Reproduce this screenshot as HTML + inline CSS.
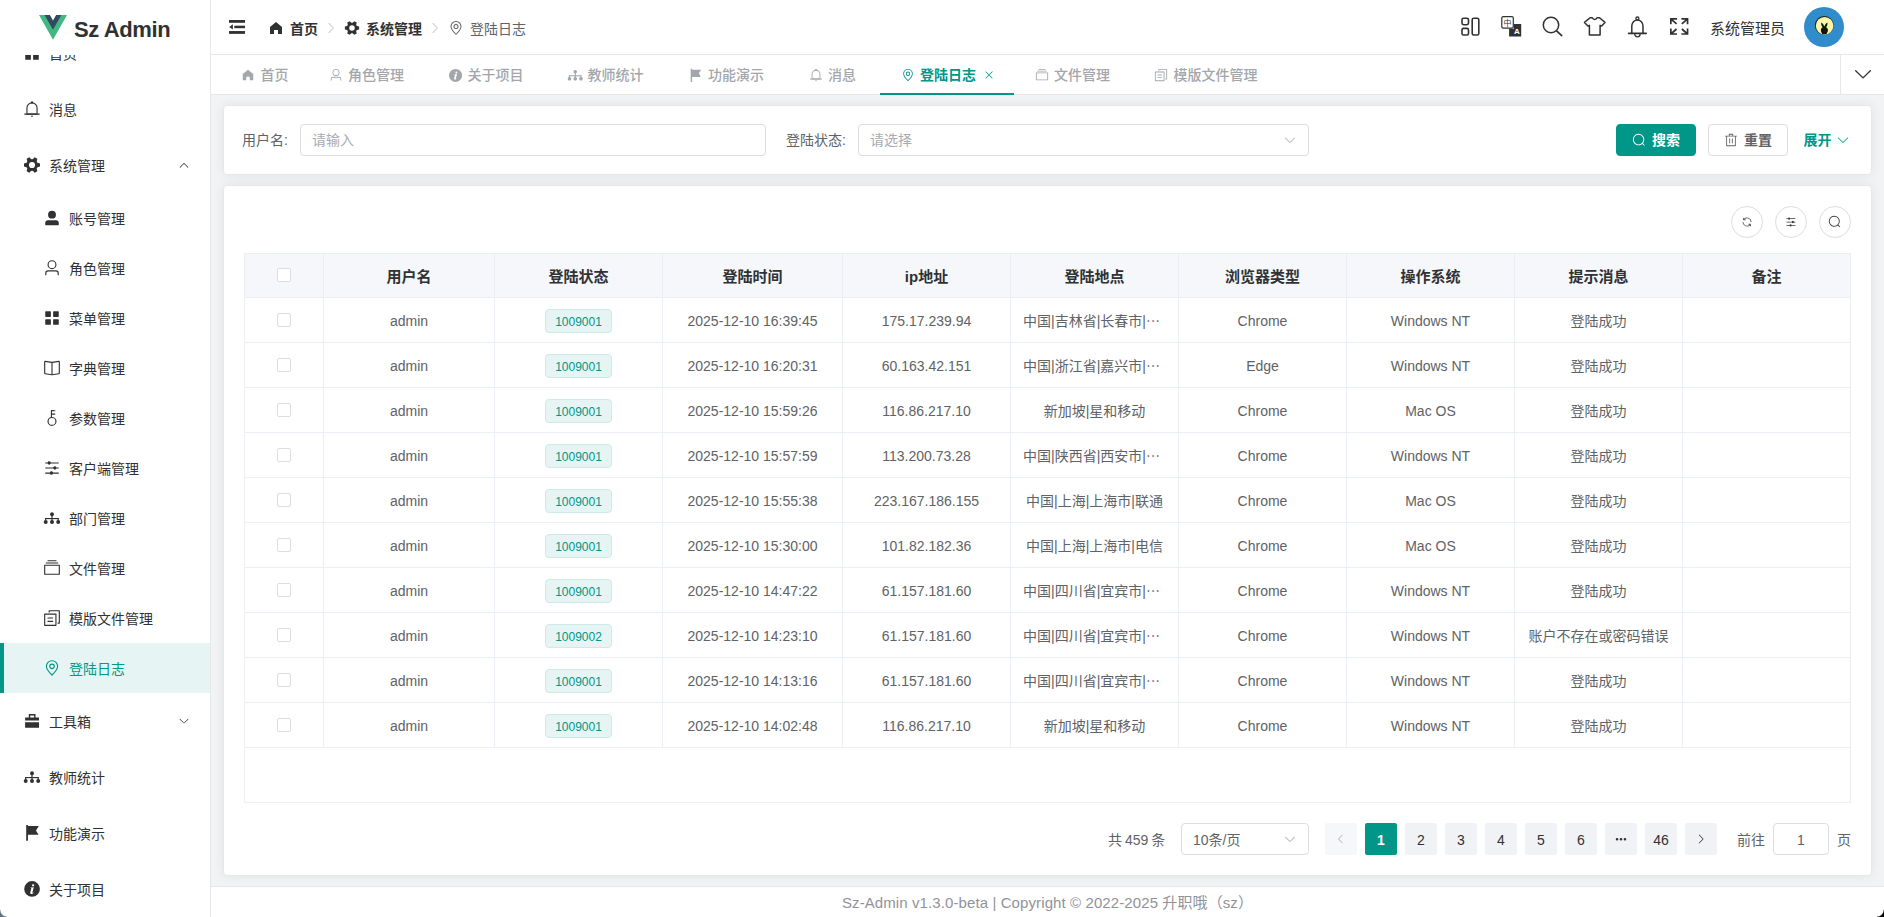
<!DOCTYPE html>
<html lang="zh-CN">
<head>
<meta charset="utf-8">
<title>Sz Admin - 登陆日志</title>
<style>
*{box-sizing:border-box;margin:0;padding:0}
html,body{width:1884px;height:917px;overflow:hidden;background:#fff}
body{font-family:"Liberation Sans","Noto Sans CJK SC",sans-serif;font-size:14px;color:#303133;position:relative;-webkit-font-smoothing:auto}
svg{display:block;fill:currentColor}
.abs{position:absolute}
/* ---------- sidebar ---------- */
#side{position:absolute;left:0;top:0;width:211px;height:917px;border-right:1px solid #e6e7e9;background:#fff;overflow:hidden}
#menu{position:absolute;left:0;top:25px;width:210px}
.mi{position:relative;height:56px;line-height:56px;padding-left:24px;white-space:nowrap;color:#303133}
.mi .ic{position:absolute;left:23px;top:19px;width:18px;height:18px}
.mi .tx{position:absolute;left:49px;top:1px}
.mi .ar{position:absolute;left:178px;top:22px;width:12px;height:12px}
.mi.sub{height:50px;line-height:50px}
.mi.sub .ic{left:43px;top:16px}
.mi.sub .tx{left:69px}
.mi.act{background:#e6f5f3;color:#009688}
.mi.act:before{content:"";position:absolute;left:0;top:0;width:4px;height:50px;background:#009688}
#logo{position:absolute;left:0;top:0;width:210px;height:55px;background:#fff}
#logo svg{position:absolute;left:39px;top:15px;width:28px;height:24.700px}
#logo span{position:absolute;left:74px;top:16px;font-size:22px;letter-spacing:-.4px;font-weight:700;line-height:28px;color:#303133;white-space:nowrap}
/* ---------- header ---------- */
#head{position:absolute;left:211px;top:0;width:1673px;height:55px;border-bottom:1px solid #e6e7e9;background:#fff}
#head .t{position:absolute;white-space:nowrap;line-height:20px;height:20px}
#tabs{position:absolute;left:211px;top:55px;width:1673px;height:40px;border-bottom:1px solid #e6e7e9;background:#fff}
.tab{position:absolute;top:0;height:39px;line-height:39px;color:#a3a6ab;font-weight:500;white-space:nowrap}
.tab .ic{position:absolute;left:0;top:13px;width:14px;height:14px}
.tab .tx{position:absolute;left:19.5px;top:1px}
.tab.on{color:#009688;font-weight:700}
/* ---------- main ---------- */
#main{position:absolute;left:211px;top:95px;width:1673px;height:791px;background:#f2f3f5;overflow:hidden}
.card{position:absolute;left:12px;width:1649px;background:#fff;border:1px solid #e6e7e9;border-radius:4px;box-shadow:0 0 12px rgba(0,0,0,.07)}
#foot{position:absolute;left:211px;top:886px;width:1673px;height:31px;border-top:1px solid #e6e7e9;background:#fff;text-align:center;color:#909399;font-size:15px;line-height:32px;white-space:nowrap;letter-spacing:.1px}

/* form */
.lb{position:absolute;top:34px;height:22px;line-height:22px;color:#606266;white-space:nowrap}
.inp{position:absolute;height:32px;border:1px solid #dcdde1;border-radius:4px;background:#fff;color:#a8abb2;line-height:30px;white-space:nowrap}
.btn{position:absolute;top:29px;width:80px;height:32px;border-radius:4px;border:1px solid #dcdde1;background:#fff;color:#606266;font-weight:700;line-height:30px;white-space:nowrap}
.btn svg{position:absolute;left:15px;top:8px;width:14px;height:14px}
.btn span{position:absolute;left:35px;top:0}
.btn.pri{background:#009688;border-color:#009688;color:#fff}
.circ{position:absolute;top:111px;width:32px;height:32px;border:1px solid #dcdde1;border-radius:50%;background:#fff;color:#3a3c40}
.circ svg{position:absolute;left:9px;top:9px;width:12px;height:12px}
/* table */
#tbl{position:absolute;left:33px;top:158px;width:1607px;height:550px;border:1px solid #ebeef5;background:#fff}
#tbl table{border-collapse:separate;border-spacing:0;table-layout:fixed;width:1605px}
#tbl th:last-child,#tbl td:last-child{border-right:0}
#tbl th,#tbl td{border-right:1px solid #ebeef5;border-bottom:1px solid #ebeef5;text-align:center;white-space:nowrap;overflow:hidden;padding:0;vertical-align:middle}
#tbl th{height:44px;background:#f5f7fa;color:#303133;font-weight:700;font-size:15px;line-height:23px;padding-top:2px}
#tbl th:first-child{padding:0 0 1px}
#tbl td:first-child{padding:0}
#tbl td{height:45px;color:#606266;line-height:23px;padding-top:2px}
#tbl td.el{text-align:left;padding-left:12px}
.ck{display:block;width:14px;height:14px;border:1px solid #dcdde1;border-radius:2px;background:#fff;margin:0 auto}
.tag{display:inline-block;height:24px;line-height:24px;padding:0 9px;font-size:12px;color:#009688;background:#e6f5f3;border:1px solid #cceae7;border-radius:4px;vertical-align:middle}
/* pagination */
.pg{position:absolute;top:729px;height:32px;line-height:32px;white-space:nowrap;color:#606266}
.pb{position:absolute;top:728px;width:32px;height:32px;line-height:34px;text-align:center;border-radius:2px;background:#f0f2f5;color:#303133}
.pb.on{background:#009688;color:#fff;font-weight:700}
.pb svg{position:absolute;left:10px;top:10px;width:12px;height:12px}
</style>
</head>
<body>
<!-- ================= SIDEBAR ================= -->
<div id="side">
  <div id="menu">
    <div class="mi"><svg class="ic" viewBox="0 0 1024 1024"><path d="M160 448a32 32 0 0 1-32-32V160.064a32 32 0 0 1 32-32h256a32 32 0 0 1 32 32V416a32 32 0 0 1-32 32zm448 0a32 32 0 0 1-32-32V160.064a32 32 0 0 1 32-32h255.936a32 32 0 0 1 32 32V416a32 32 0 0 1-32 32zM160 896a32 32 0 0 1-32-32V608a32 32 0 0 1 32-32h256a32 32 0 0 1 32 32v256a32 32 0 0 1-32 32zm448 0a32 32 0 0 1-32-32V608a32 32 0 0 1 32-32h255.936a32 32 0 0 1 32 32v256a32 32 0 0 1-32 32z"/></svg><span class="tx">首页</span></div>
    <div class="mi"><svg class="ic" viewBox="0 0 1024 1024"><path d="M512 64a64 64 0 0 1 64 64v64H448v-64a64 64 0 0 1 64-64"/><path d="M256 768h512V448a256 256 0 1 0-512 0zm256-640a320 320 0 0 1 320 320v384H192V448a320 320 0 0 1 320-320"/><path d="M96 768h832q32 0 32 32t-32 32H96q-32 0-32-32t32-32m352 128h128a64 64 0 0 1-128 0"/></svg><span class="tx">消息</span></div>
    <div class="mi"><svg class="ic" viewBox="-1 -1 18 18"><path fill-rule="evenodd" d="M13.45 5.75L16.00 6.45L16.00 9.55L13.45 10.25A5.9 5.9 0 0 1 12.68 11.60L13.34 14.15L10.66 15.70L8.78 13.85A5.9 5.9 0 0 1 7.22 13.85L5.34 15.70L2.66 14.15L3.32 11.60A5.9 5.9 0 0 1 2.55 10.25L0.00 9.55L-0.00 6.45L2.55 5.75A5.9 5.9 0 0 1 3.32 4.40L2.66 1.85L5.34 0.30L7.22 2.15A5.9 5.9 0 0 1 8.78 2.15L10.66 0.30L13.34 1.85L12.68 4.40A5.9 5.9 0 0 1 13.45 5.75ZM11.1 8A3.1 3.1 0 1 0 4.9 8A3.1 3.1 0 1 0 11.1 8Z"/></svg><span class="tx">系统管理</span><svg class="ar" viewBox="0 0 1024 1024"><path d="m488.832 344.32-339.84 356.672a32 32 0 0 0 0 44.16l.384.384a29.44 29.44 0 0 0 42.688 0l320-335.872 319.872 335.872a29.44 29.44 0 0 0 42.688 0l.384-.384a32 32 0 0 0 0-44.16L535.168 344.32a32 32 0 0 0-46.336 0"/></svg></div>
    <div class="mi sub"><svg class="ic" viewBox="0 0 1024 1024"><path d="M288 320a224 224 0 1 0 448 0 224 224 0 1 0-448 0m544 608H160a32 32 0 0 1-32-32v-96a160 160 0 0 1 160-160h448a160 160 0 0 1 160 160v96a32 32 0 0 1-32 32z"/></svg><span class="tx">账号管理</span></div>
    <div class="mi sub"><svg class="ic" viewBox="0 0 1024 1024"><path d="M512 512a192 192 0 1 0 0-384 192 192 0 0 0 0 384m0 64a256 256 0 1 1 0-512 256 256 0 0 1 0 512m320 320v-96a96 96 0 0 0-96-96H288a96 96 0 0 0-96 96v96a32 32 0 1 1-64 0v-96a160 160 0 0 1 160-160h448a160 160 0 0 1 160 160v96a32 32 0 1 1-64 0"/></svg><span class="tx">角色管理</span></div>
    <div class="mi sub"><svg class="ic" viewBox="0 0 1024 1024"><path d="M160 448a32 32 0 0 1-32-32V160.064a32 32 0 0 1 32-32h256a32 32 0 0 1 32 32V416a32 32 0 0 1-32 32zm448 0a32 32 0 0 1-32-32V160.064a32 32 0 0 1 32-32h255.936a32 32 0 0 1 32 32V416a32 32 0 0 1-32 32zM160 896a32 32 0 0 1-32-32V608a32 32 0 0 1 32-32h256a32 32 0 0 1 32 32v256a32 32 0 0 1-32 32zm448 0a32 32 0 0 1-32-32V608a32 32 0 0 1 32-32h255.936a32 32 0 0 1 32 32v256a32 32 0 0 1-32 32z"/></svg><span class="tx">菜单管理</span></div>
    <div class="mi sub"><svg class="ic" viewBox="0 0 1024 1024"><path d="m512 863.36 384-54.848v-638.72L525.568 222.72a96 96 0 0 1-27.136 0L128 169.792v638.72zM137.024 106.432l370.432 52.928a32 32 0 0 0 9.088 0l370.432-52.928A64 64 0 0 1 960 169.792v638.72a64 64 0 0 1-54.976 63.36l-388.48 55.488a32 32 0 0 1-9.088 0l-388.48-55.488A64 64 0 0 1 64 808.512v-638.72a64 64 0 0 1 73.024-63.36z"/><path d="M480 192h64v704h-64z"/></svg><span class="tx">字典管理</span></div>
    <div class="mi sub"><svg class="ic" viewBox="0 0 1024 1024"><path d="M448 456.064V96a32 32 0 0 1 32-32.064L672 64a32 32 0 0 1 0 64H512v128h160a32 32 0 0 1 0 64H512v128a256 256 0 1 1-64 8.064M512 896a192 192 0 1 0 0-384 192 192 0 0 0 0 384"/></svg><span class="tx">参数管理</span></div>
    <div class="mi sub"><svg class="ic" viewBox="0 0 1024 1024"><path d="M389.44 768a96.064 96.064 0 0 1 181.12 0H896v64H570.56a96.064 96.064 0 0 1-181.12 0H128v-64zm192-288a96.064 96.064 0 0 1 181.12 0H896v64H762.56a96.064 96.064 0 0 1-181.12 0H128v-64zm-320-288a96.064 96.064 0 0 1 181.12 0H896v64H442.56a96.064 96.064 0 0 1-181.12 0H128v-64z"/></svg><span class="tx">客户端管理</span></div>
    <div class="mi sub"><svg class="ic" viewBox="0 0 18 18"><circle cx="9" cy="5.200" r="1.950"/><rect x="8.400" y="5.200" width="1.200" height="7.500"/><rect x="2.050" y="9" width="13.700" height="1.150"/><rect x="2.050" y="9" width="1.150" height="3.500"/><rect x="14.600" y="9" width="1.150" height="3.500"/><circle cx="2.700" cy="12.900" r="2"/><circle cx="9" cy="12.900" r="2"/><circle cx="15.200" cy="12.900" r="2"/></svg><span class="tx">部门管理</span></div>
    <div class="mi sub"><svg class="ic" viewBox="0 0 1024 1024"><path d="M128 384v448h768V384zm-32-64h832a32 32 0 0 1 32 32v512a32 32 0 0 1-32 32H96a32 32 0 0 1-32-32V352a32 32 0 0 1 32-32m64-128h704v64H160zm96-128h512v64H256z"/></svg><span class="tx">文件管理</span></div>
    <div class="mi sub"><svg class="ic" viewBox="0 0 1024 1024"><path d="M128 320v576h576V320zm-32-64h640a32 32 0 0 1 32 32v640a32 32 0 0 1-32 32H96a32 32 0 0 1-32-32V288a32 32 0 0 1 32-32M960 96v704a32 32 0 0 1-32 32h-96v-64h64V128H384v64h-64V96a32 32 0 0 1 32-32h576a32 32 0 0 1 32 32M256 672h320v64H256zm0-192h320v64H256z"/></svg><span class="tx">模版文件管理</span></div>
    <div class="mi sub act"><svg class="ic" viewBox="0 0 1024 1024"><path d="M800 416a288 288 0 1 0-576 0c0 118.144 94.528 272.128 288 456.576C705.472 688.128 800 534.144 800 416M512 960C277.312 746.688 160 565.312 160 416a352 352 0 0 1 704 0c0 149.312-117.312 330.688-352 544"/><path d="M512 512a96 96 0 1 0 0-192 96 96 0 0 0 0 192m0 64a160 160 0 1 1 0-320 160 160 0 0 1 0 320"/></svg><span class="tx">登陆日志</span></div>
    <div class="mi"><svg class="ic" viewBox="0 0 18 18"><path fill-rule="evenodd" d="M5.800 2h6.700v3.400H16v3.200H2.100V5.400h3.700zM7.200 3.400v2h3.900v-2zM2.100 10.200H16v5.600H2.100z"/></svg><span class="tx">工具箱</span><svg class="ar" viewBox="0 0 1024 1024"><path d="M831.872 340.864 512 652.672 192.128 340.864a30.592 30.592 0 0 0-42.752 0 29.12 29.12 0 0 0 0 41.6L489.664 714.24a32 32 0 0 0 44.672 0l340.288-331.712a29.12 29.12 0 0 0 0-41.728 30.592 30.592 0 0 0-42.752 0z"/></svg></div>
    <div class="mi"><svg class="ic" viewBox="0 0 18 18"><circle cx="9" cy="5.200" r="1.950"/><rect x="8.400" y="5.200" width="1.200" height="7.500"/><rect x="2.050" y="9" width="13.700" height="1.150"/><rect x="2.050" y="9" width="1.150" height="3.500"/><rect x="14.600" y="9" width="1.150" height="3.500"/><circle cx="2.700" cy="12.900" r="2"/><circle cx="9" cy="12.900" r="2"/><circle cx="15.200" cy="12.900" r="2"/></svg><span class="tx">教师统计</span></div>
    <div class="mi"><svg class="ic" viewBox="0 0 18 18"><path d="M3.200 1h1.750v15.800H3.200zM4.950 2h10.850l-2.800 4.400 2.500 4.400H4.950z"/></svg><span class="tx">功能演示</span></div>
    <div class="mi"><svg class="ic" viewBox="0 0 18 18"><path fill-rule="evenodd" d="M9.050 1.100a7.850 7.850 0 1 0 0 15.700 7.850 7.850 0 0 0 0-15.700zM10.100 4.150a1.150 1.150 0 1 1 0 2.300 1.150 1.150 0 0 1 0-2.300zM7.700 7.500l3.100-.2-1.400 5.200c-.1.400.1.500.5.300l.5-.3.200.5c-.9.800-1.900 1.100-2.700.9-.6-.2-.8-.7-.6-1.500l1.100-4.100-.8-.2z"/></svg><span class="tx">关于项目</span></div>
  </div>
  <div id="logo">
    <svg viewBox="0 0 261.76 226.69" preserveAspectRatio="none"><path d="M161.096.001l-30.224 52.35L100.647.002H-.005L130.872 226.69 261.749 0z" fill="#41b883"/><path d="M161.096.001l-30.224 52.35L100.647.002H52.346l78.526 136.01L209.398.001z" fill="#34495e"/></svg>
    <span>Sz Admin</span>
  </div>
</div>

<!-- ================= HEADER ================= -->
<div id="head">
  <svg class="abs" style="left:17px;top:19px;width:18px;height:16px;color:#303133" viewBox="0 0 18 16"><rect x="1" y="1" width="16" height="2.800"/><rect x="6.300" y="6.700" width="10.700" height="2.500"/><rect x="1" y="12.050" width="16" height="2.800"/><path d="M1.200 7.900L4.900 5.200V10.500z"/></svg>
  <svg class="abs" style="left:57px;top:20px;width:16px;height:16px" viewBox="0 0 1024 1024"><path d="M512 128 128 447.936V896h255.936V640H640v256h255.936V447.936z"/></svg>
  <span class="t" style="left:79px;top:19px;font-weight:700">首页</span>
  <svg class="abs" style="left:113px;top:21px;width:14px;height:14px;color:#c0c4cc" viewBox="0 0 1024 1024"><path d="M340.864 149.312a30.592 30.592 0 0 0 0 42.752L652.736 512 340.864 831.872a30.592 30.592 0 0 0 0 42.752 29.12 29.12 0 0 0 41.728 0L714.24 534.336a32 32 0 0 0 0-44.672L382.592 149.376a29.12 29.12 0 0 0-41.728 0z"/></svg>
  <svg class="abs" style="left:133px;top:20px;width:16px;height:16px" viewBox="-1 -1 18 18"><path fill-rule="evenodd" d="M13.45 5.75L16.00 6.45L16.00 9.55L13.45 10.25A5.9 5.9 0 0 1 12.68 11.60L13.34 14.15L10.66 15.70L8.78 13.85A5.9 5.9 0 0 1 7.22 13.85L5.34 15.70L2.66 14.15L3.32 11.60A5.9 5.9 0 0 1 2.55 10.25L0.00 9.55L-0.00 6.45L2.55 5.75A5.9 5.9 0 0 1 3.32 4.40L2.66 1.85L5.34 0.30L7.22 2.15A5.9 5.9 0 0 1 8.78 2.15L10.66 0.30L13.34 1.85L12.68 4.40A5.9 5.9 0 0 1 13.45 5.75ZM11.1 8A3.1 3.1 0 1 0 4.9 8A3.1 3.1 0 1 0 11.1 8Z"/></svg>
  <span class="t" style="left:155px;top:19px;font-weight:700">系统管理</span>
  <svg class="abs" style="left:217px;top:21px;width:14px;height:14px;color:#c0c4cc" viewBox="0 0 1024 1024"><path d="M340.864 149.312a30.592 30.592 0 0 0 0 42.752L652.736 512 340.864 831.872a30.592 30.592 0 0 0 0 42.752 29.12 29.12 0 0 0 41.728 0L714.24 534.336a32 32 0 0 0 0-44.672L382.592 149.376a29.12 29.12 0 0 0-41.728 0z"/></svg>
  <svg class="abs" style="left:237px;top:20px;width:16px;height:16px;color:#606266" viewBox="0 0 1024 1024"><path d="M800 416a288 288 0 1 0-576 0c0 118.144 94.528 272.128 288 456.576C705.472 688.128 800 534.144 800 416M512 960C277.312 746.688 160 565.312 160 416a352 352 0 0 1 704 0c0 149.312-117.312 330.688-352 544"/><path d="M512 512a96 96 0 1 0 0-192 96 96 0 0 0 0 192m0 64a160 160 0 1 1 0-320 160 160 0 0 1 0 320"/></svg>
  <span class="t" style="left:259px;top:19px;color:#606266">登陆日志</span>

  <svg class="abs" style="left:1239px;top:0;width:250px;height:54px;color:#303133;fill:none" viewBox="1450 0 250 54" stroke="currentColor" stroke-width="1.600" stroke-linejoin="round" stroke-linecap="round">
    <!-- layout -->
    <rect x="1462" y="18.200" width="6.500" height="6.500" rx="1.600"/>
    <rect x="1462" y="28.400" width="6.500" height="6.600" rx="1.600"/>
    <rect x="1472.200" y="18.200" width="6.600" height="16.800" rx="1.600"/>
    <!-- translate -->
    <rect x="1501.800" y="16.600" width="11.500" height="11.600" rx="1.400" stroke-width="1.200" fill="#fff"/>
    <path d="M1513.900 24h7.300v12.400h-12.100v-7.600h4.800z" fill="currentColor" stroke="none"/>
    <text x="1507.550" y="25.600" font-size="8" text-anchor="middle" fill="currentColor" stroke="none" font-family="'Liberation Sans','Noto Sans CJK SC',sans-serif">中</text>
    <text x="1516.900" y="34.200" font-size="8" font-weight="700" text-anchor="middle" fill="#fff" stroke="none" font-family="'Liberation Sans','Noto Sans CJK SC',sans-serif">A</text>
    <!-- search -->
    <circle cx="1551" cy="25" r="7.700" stroke-width="1.500"/>
    <path d="M1556.600 30.800L1561.700 35.700" stroke-width="1.600"/>
    <!-- shirt -->
    <path d="M1590 17.700h2.400c.5 1.200 1.300 1.700 2.300 1.700s1.800-.5 2.300-1.700h2.500l5.500 4.700-3.400 3.700-1.500-.8v9.700h-10.700v-9.700l-1.500.8-3.400-3.700z" stroke-width="1.500"/>
    <!-- bell -->
    <circle cx="1637.400" cy="18.500" r="1.500" stroke-width="1.300"/>
    <path d="M1631.800 33.400v-7.600a5.600 5.900 0 0 1 11.200 0v7.600" stroke-width="1.500"/>
    <path d="M1628.600 33.400h17.600" stroke-width="1.600"/>
    <path d="M1634.700 34a2.700 2.900 0 0 0 5.400 0" stroke-width="1.400"/>
    <!-- fullscreen -->
    <g stroke-width="1.700" stroke-linecap="butt" stroke-linejoin="miter">
      <path d="M1677 18.950h-6.150v5.400M1670.850 18.950l5.700 5"/>
      <path d="M1681.400 18.950h6.150v5.400M1687.550 18.950l-5.700 5"/>
      <path d="M1677 34h-6.150v-5.400M1670.850 34l5.700-5"/>
      <path d="M1681.400 34h6.150v-5.400M1687.550 34l-5.700-5"/>
    </g>
  </svg>
  <span class="t" style="left:1499px;top:18px;font-size:15px;line-height:22px;height:22px">系统管理员</span>
  <svg class="abs" style="left:1593px;top:7px;width:40px;height:40px" viewBox="0 0 40 40">
    <circle cx="20" cy="20" r="20" fill="#308ccb"/>
    <circle cx="20.300" cy="18.300" r="9.400" fill="#1b1f10"/>
    <circle cx="20.600" cy="18.800" r="8.800" fill="#fdf6a9"/>
    <path d="M17.300 15.400c1.500.8 2.500 2.500 3 4.200.6-1.700 1.600-3.400 3.100-4.200.4 1.600-.3 3.600-1.300 4.900 1.500.7 2.100 2.300 1.700 3.900-.3 1.200-1 2.200-1.300 2.700h-4.300c-.5-.8-1.100-1.700-1.300-2.800-.3-1.600.3-3.100 1.700-3.800-1-1.300-1.700-3.300-1.300-4.900z" fill="#0f1600"/>
  </svg>
</div>

<!-- ================= TABS ================= -->
<div id="tabs">
  <div class="tab" style="left:30px"><svg class="ic" viewBox="0 0 1024 1024"><path d="M512 128 128 447.936V896h255.936V640H640v256h255.936V447.936z"/></svg><span class="tx">首页</span></div>
  <div class="tab" style="left:117.5px"><svg class="ic" viewBox="0 0 1024 1024"><path d="M512 512a192 192 0 1 0 0-384 192 192 0 0 0 0 384m0 64a256 256 0 1 1 0-512 256 256 0 0 1 0 512m320 320v-96a96 96 0 0 0-96-96H288a96 96 0 0 0-96 96v96a32 32 0 1 1-64 0v-96a160 160 0 0 1 160-160h448a160 160 0 0 1 160 160v96a32 32 0 1 1-64 0"/></svg><span class="tx">角色管理</span></div>
  <div class="tab" style="left:237px"><svg class="ic" style="left:-0.50px;top:12.50px;width:15px;height:15px" viewBox="0 0 18 18"><path fill-rule="evenodd" d="M9.050 1.100a7.850 7.850 0 1 0 0 15.700 7.850 7.850 0 0 0 0-15.700zM10.100 4.150a1.150 1.150 0 1 1 0 2.300 1.150 1.150 0 0 1 0-2.300zM7.700 7.500l3.100-.2-1.400 5.200c-.1.400.1.500.5.300l.5-.3.200.5c-.9.800-1.900 1.100-2.700.9-.6-.2-.8-.7-.6-1.500l1.100-4.100-.8-.2z"/></svg><span class="tx">关于项目</span></div>
  <div class="tab" style="left:357px"><svg class="ic" style="left:-1.25px;top:11.75px;width:16.5px;height:16.5px" viewBox="0 0 18 18"><circle cx="9" cy="5.200" r="1.950"/><rect x="8.400" y="5.200" width="1.200" height="7.500"/><rect x="2.050" y="9" width="13.700" height="1.150"/><rect x="2.050" y="9" width="1.150" height="3.500"/><rect x="14.600" y="9" width="1.150" height="3.500"/><circle cx="2.700" cy="12.900" r="2"/><circle cx="9" cy="12.900" r="2"/><circle cx="15.200" cy="12.900" r="2"/></svg><span class="tx">教师统计</span></div>
  <div class="tab" style="left:477.5px"><svg class="ic" style="left:-0.50px;top:12.50px;width:15px;height:15px" viewBox="0 0 18 18"><path d="M3.200 1h1.750v15.800H3.200zM4.950 2h10.850l-2.800 4.400 2.500 4.400H4.950z"/></svg><span class="tx">功能演示</span></div>
  <div class="tab" style="left:597.5px"><svg class="ic" viewBox="0 0 1024 1024"><path d="M512 64a64 64 0 0 1 64 64v64H448v-64a64 64 0 0 1 64-64"/><path d="M256 768h512V448a256 256 0 1 0-512 0zm256-640a320 320 0 0 1 320 320v384H192V448a320 320 0 0 1 320-320"/><path d="M96 768h832q32 0 32 32t-32 32H96q-32 0-32-32t32-32m352 128h128a64 64 0 0 1-128 0"/></svg><span class="tx">消息</span></div>
  <div class="tab on" style="left:689.5px"><svg class="ic" viewBox="0 0 1024 1024"><path d="M800 416a288 288 0 1 0-576 0c0 118.144 94.528 272.128 288 456.576C705.472 688.128 800 534.144 800 416M512 960C277.312 746.688 160 565.312 160 416a352 352 0 0 1 704 0c0 149.312-117.312 330.688-352 544"/><path d="M512 512a96 96 0 1 0 0-192 96 96 0 0 0 0 192m0 64a160 160 0 1 1 0-320 160 160 0 0 1 0 320"/></svg><span class="tx">登陆日志</span></div>
  <div class="tab" style="left:823.5px"><svg class="ic" viewBox="0 0 1024 1024"><path d="M128 384v448h768V384zm-32-64h832a32 32 0 0 1 32 32v512a32 32 0 0 1-32 32H96a32 32 0 0 1-32-32V352a32 32 0 0 1 32-32m64-128h704v64H160zm96-128h512v64H256z"/></svg><span class="tx">文件管理</span></div>
  <div class="tab" style="left:943px"><svg class="ic" viewBox="0 0 1024 1024"><path d="M128 320v576h576V320zm-32-64h640a32 32 0 0 1 32 32v640a32 32 0 0 1-32 32H96a32 32 0 0 1-32-32V288a32 32 0 0 1 32-32M960 96v704a32 32 0 0 1-32 32h-96v-64h64V128H384v64h-64V96a32 32 0 0 1 32-32h576a32 32 0 0 1 32 32M256 672h320v64H256zm0-192h320v64H256z"/></svg><span class="tx">模版文件管理</span></div>
  <svg class="abs" style="left:772px;top:13.500px;width:12px;height:12px;color:#009688" viewBox="0 0 1024 1024"><path d="M764.288 214.592 512 466.88 259.712 214.592a31.936 31.936 0 0 0-45.12 45.12L466.752 512 214.528 764.224a31.936 31.936 0 1 0 45.12 45.184L512 557.184l252.288 252.288a31.936 31.936 0 0 0 45.12-45.12L557.12 512.064l252.288-252.352a31.936 31.936 0 1 0-45.12-45.184z"/></svg>
  <div class="abs" style="left:669px;top:38px;width:134px;height:2px;background:#009688"></div>
  <div class="abs" style="left:1629px;top:0;width:1px;height:39px;background:#e6e7e9"></div>
  <svg class="abs" style="left:1641.200px;top:8px;width:22px;height:22px;color:#303133" viewBox="0 0 1024 1024"><path d="M831.872 340.864 512 652.672 192.128 340.864a30.592 30.592 0 0 0-42.752 0 29.12 29.12 0 0 0 0 41.6L489.664 714.24a32 32 0 0 0 44.672 0l340.288-331.712a29.12 29.12 0 0 0 0-41.728 30.592 30.592 0 0 0-42.752 0z"/></svg>
</div>

<!-- ================= MAIN ================= -->
<div id="main">
  <div class="card" id="c1" style="top:10px;height:70px"></div>
  <div class="card" id="c2" style="top:90px;height:691px"></div>
  <span class="lb" style="left:31px">用户名:</span>
  <div class="inp" style="left:89px;top:29px;width:466px;padding-left:11px">请输入</div>
  <span class="lb" style="left:575px">登陆状态:</span>
  <div class="inp" style="left:647px;top:29px;width:451px;padding-left:11px">请选择<svg class="abs" style="left:424px;top:8px;width:14px;height:14px" viewBox="0 0 1024 1024"><path d="M831.872 340.864 512 652.672 192.128 340.864a30.592 30.592 0 0 0-42.752 0 29.12 29.12 0 0 0 0 41.6L489.664 714.24a32 32 0 0 0 44.672 0l340.288-331.712a29.12 29.12 0 0 0 0-41.728 30.592 30.592 0 0 0-42.752 0z"/></svg></div>
  <div class="btn pri" style="left:1405px"><svg viewBox="0 0 1024 1024"><path d="m795.904 750.72 124.992 124.928a32 32 0 0 1-45.248 45.248L750.656 795.904a416 416 0 1 1 45.248-45.248zM480 832a352 352 0 1 0 0-704 352 352 0 0 0 0 704"/></svg><span>搜索</span></div>
  <div class="btn" style="left:1497px"><svg viewBox="0 0 1024 1024"><path d="M160 256H96a32 32 0 0 1 0-64h256V95.936a32 32 0 0 1 32-32h256a32 32 0 0 1 32 32V192h256a32 32 0 1 1 0 64h-64v672a32 32 0 0 1-32 32H192a32 32 0 0 1-32-32zm448-64v-64H416v64zM224 896h576V256H224zm192-128a32 32 0 0 1-32-32V416a32 32 0 0 1 64 0v320a32 32 0 0 1-32 32m192 0a32 32 0 0 1-32-32V416a32 32 0 0 1 64 0v320a32 32 0 0 1-32 32"/></svg><span>重置</span></div>
  <span class="lb" style="left:1592.500px;top:33.500px;color:#009688;font-weight:700">展开</span>
  <svg class="abs" style="left:1625px;top:38px;width:14px;height:14px;color:#009688" viewBox="0 0 1024 1024"><path d="M831.872 340.864 512 652.672 192.128 340.864a30.592 30.592 0 0 0-42.752 0 29.12 29.12 0 0 0 0 41.6L489.664 714.24a32 32 0 0 0 44.672 0l340.288-331.712a29.12 29.12 0 0 0 0-41.728 30.592 30.592 0 0 0-42.752 0z"/></svg>

  <div class="circ" style="left:1520px"><svg viewBox="0 0 1024 1024"><path d="M771.776 794.88A384 384 0 0 1 128 512h64a320 320 0 0 0 555.712 216.448H654.72a32 32 0 1 1 0-64h149.056a32 32 0 0 1 32 32v148.928a32 32 0 1 1-64 0v-50.56zM276.288 295.616h92.992a32 32 0 0 1 0 64H220.16a32 32 0 0 1-32-32V178.56a32 32 0 0 1 64 0v50.56A384 384 0 0 1 896.128 512h-64a320 320 0 0 0-555.776-216.384z"/></svg></div>
  <div class="circ" style="left:1564px"><svg viewBox="0 0 1024 1024"><path d="M389.44 768a96.064 96.064 0 0 1 181.12 0H896v64H570.56a96.064 96.064 0 0 1-181.12 0H128v-64zm192-288a96.064 96.064 0 0 1 181.12 0H896v64H762.56a96.064 96.064 0 0 1-181.12 0H128v-64zm-320-288a96.064 96.064 0 0 1 181.12 0H896v64H442.56a96.064 96.064 0 0 1-181.12 0H128v-64z"/></svg></div>
  <div class="circ" style="left:1608px"><svg style="left:8.300px;top:8.300px;width:13.400px;height:13.400px" viewBox="0 0 1024 1024"><path d="m795.904 750.72 124.992 124.928a32 32 0 0 1-45.248 45.248L750.656 795.904a416 416 0 1 1 45.248-45.248zM480 832a352 352 0 1 0 0-704 352 352 0 0 0 0 704"/></svg></div>
  <div id="tbl"><table><colgroup><col style="width:79px"><col style="width:171px"><col style="width:168px"><col style="width:180px"><col style="width:168px"><col style="width:168px"><col style="width:168px"><col style="width:168px"><col style="width:168px"><col style="width:167px"></colgroup>
<thead><tr><th><i class="ck"></i></th><th>用户名</th><th>登陆状态</th><th>登陆时间</th><th>ip地址</th><th>登陆地点</th><th>浏览器类型</th><th>操作系统</th><th>提示消息</th><th>备注</th></tr></thead>
<tbody>
<tr><td><i class="ck"></i></td><td>admin</td><td><span class="tag">1009001</span></td><td>2025-12-10 16:39:45</td><td>175.17.239.94</td><td class="el">中国|吉林省|长春市|⋯</td><td>Chrome</td><td>Windows NT</td><td>登陆成功</td><td></td></tr>
<tr><td><i class="ck"></i></td><td>admin</td><td><span class="tag">1009001</span></td><td>2025-12-10 16:20:31</td><td>60.163.42.151</td><td class="el">中国|浙江省|嘉兴市|⋯</td><td>Edge</td><td>Windows NT</td><td>登陆成功</td><td></td></tr>
<tr><td><i class="ck"></i></td><td>admin</td><td><span class="tag">1009001</span></td><td>2025-12-10 15:59:26</td><td>116.86.217.10</td><td>新加坡|星和移动</td><td>Chrome</td><td>Mac OS</td><td>登陆成功</td><td></td></tr>
<tr><td><i class="ck"></i></td><td>admin</td><td><span class="tag">1009001</span></td><td>2025-12-10 15:57:59</td><td>113.200.73.28</td><td class="el">中国|陕西省|西安市|⋯</td><td>Chrome</td><td>Windows NT</td><td>登陆成功</td><td></td></tr>
<tr><td><i class="ck"></i></td><td>admin</td><td><span class="tag">1009001</span></td><td>2025-12-10 15:55:38</td><td>223.167.186.155</td><td>中国|上海|上海市|联通</td><td>Chrome</td><td>Mac OS</td><td>登陆成功</td><td></td></tr>
<tr><td><i class="ck"></i></td><td>admin</td><td><span class="tag">1009001</span></td><td>2025-12-10 15:30:00</td><td>101.82.182.36</td><td>中国|上海|上海市|电信</td><td>Chrome</td><td>Mac OS</td><td>登陆成功</td><td></td></tr>
<tr><td><i class="ck"></i></td><td>admin</td><td><span class="tag">1009001</span></td><td>2025-12-10 14:47:22</td><td>61.157.181.60</td><td class="el">中国|四川省|宜宾市|⋯</td><td>Chrome</td><td>Windows NT</td><td>登陆成功</td><td></td></tr>
<tr><td><i class="ck"></i></td><td>admin</td><td><span class="tag">1009002</span></td><td>2025-12-10 14:23:10</td><td>61.157.181.60</td><td class="el">中国|四川省|宜宾市|⋯</td><td>Chrome</td><td>Windows NT</td><td>账户不存在或密码错误</td><td></td></tr>
<tr><td><i class="ck"></i></td><td>admin</td><td><span class="tag">1009001</span></td><td>2025-12-10 14:13:16</td><td>61.157.181.60</td><td class="el">中国|四川省|宜宾市|⋯</td><td>Chrome</td><td>Windows NT</td><td>登陆成功</td><td></td></tr>
<tr><td><i class="ck"></i></td><td>admin</td><td><span class="tag">1009001</span></td><td>2025-12-10 14:02:48</td><td>116.86.217.10</td><td>新加坡|星和移动</td><td>Chrome</td><td>Windows NT</td><td>登陆成功</td><td></td></tr>
</tbody></table></div>
  <span class="pg" style="left:897px;word-spacing:-1px">共 459 条</span>
  <div class="inp" style="left:970px;top:728px;width:128px;padding-left:11px;color:#606266;line-height:32px">10条/页<svg class="abs" style="left:101px;top:8px;width:14px;height:14px;color:#a8abb2" viewBox="0 0 1024 1024"><path d="M831.872 340.864 512 652.672 192.128 340.864a30.592 30.592 0 0 0-42.752 0 29.12 29.12 0 0 0 0 41.6L489.664 714.24a32 32 0 0 0 44.672 0l340.288-331.712a29.12 29.12 0 0 0 0-41.728 30.592 30.592 0 0 0-42.752 0z"/></svg></div>
  <div class="pb" style="left:1114px;color:#a8abb2;background:#f5f7fa"><svg viewBox="0 0 1024 1024"><path d="M609.408 149.376 277.76 489.6a32 32 0 0 0 0 44.672l331.648 340.352a29.12 29.12 0 0 0 41.728 0 30.592 30.592 0 0 0 0-42.752L339.264 511.936l311.872-319.872a30.592 30.592 0 0 0 0-42.688 29.12 29.12 0 0 0-41.728 0z"/></svg></div>
  <div class="pb on" style="left:1154px">1</div>
  <div class="pb" style="left:1194px">2</div>
  <div class="pb" style="left:1234px">3</div>
  <div class="pb" style="left:1274px">4</div>
  <div class="pb" style="left:1314px">5</div>
  <div class="pb" style="left:1354px">6</div>
  <div class="pb" style="left:1394px"><svg viewBox="0 0 1024 1024"><path d="M176 416a112 112 0 1 1 0 224 112 112 0 0 1 0-224m336 0a112 112 0 1 1 0 224 112 112 0 0 1 0-224m336 0a112 112 0 1 1 0 224 112 112 0 0 1 0-224"/></svg></div>
  <div class="pb" style="left:1434px">46</div>
  <div class="pb" style="left:1474px"><svg viewBox="0 0 1024 1024"><path d="M340.864 149.312a30.592 30.592 0 0 0 0 42.752L652.736 512 340.864 831.872a30.592 30.592 0 0 0 0 42.752 29.12 29.12 0 0 0 41.728 0L714.24 534.336a32 32 0 0 0 0-44.672L382.592 149.376a29.12 29.12 0 0 0-41.728 0z"/></svg></div>
  <span class="pg" style="left:1526px">前往</span>
  <div class="inp" style="left:1562px;top:728px;width:56px;text-align:center;color:#606266;line-height:32px">1</div>
  <span class="pg" style="left:1626px">页</span>
</div>

<div id="foot">Sz-Admin v1.3.0-beta | Copyright © 2022-2025 升职哦（sz）</div>
<div class="abs" style="left:0;top:910px;width:7px;height:7px;background:radial-gradient(circle at 100% 0,rgba(95,115,131,0) 6px,#5f7383 7.200px)"></div>
<div class="abs" style="left:1877px;top:910px;width:7px;height:7px;background:radial-gradient(circle at 0 0,rgba(0,0,0,0) 6px,#000 7.200px)"></div>
</body>
</html>
